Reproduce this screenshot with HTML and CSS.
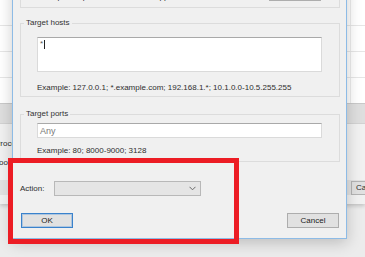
FILE: index.html
```html
<!DOCTYPE html>
<html lang="en">
<head>
  <meta charset="UTF-8" />
  <title>Rule - Target</title>
  <link rel="stylesheet" href="styles.css">
</head>
<body>

  <div class="mainwin">
    <div class="list">
      <div class="row"><span class="cell"></span></div>
      <div class="row"><span class="cell"></span></div>
      <div class="row"><span class="cell"></span></div>
      <div class="row"><span class="cell"></span></div>
    </div>
    <div class="panel">
      <div class="band"></div>
      <div class="prow first"><span class="plabel">Process</span></div>
      <div class="prow"><span class="plabel">Tools</span></div>
      <div class="bar">
        <span class="bbtn">Cancel</span>
      </div>
    </div>
  </div>

  <div class="dialog">
    <div class="topgroup">
      <div class="toprow">
        <span class="hint">Example: iexplore.exe; "C:\some app.exe"; fire*.exe; *.bin</span>
        <span class="btn small">Browse...</span>
      </div>
    </div>

    <fieldset class="group hosts">
      <legend>Target hosts</legend>
      <div class="textarea">*<span class="caret"></span></div>
      <p class="hint">Example: 127.0.0.1; *.example.com; 192.168.1.*; 10.1.0.0-10.5.255.255</p>
    </fieldset>

    <fieldset class="group ports">
      <legend>Target ports</legend>
      <div class="input">Any</div>
      <p class="hint">Example: 80; 8000-9000; 3128</p>
    </fieldset>

    <div class="action">
      <span class="label">Action:</span>
      <div class="select">
        <svg width="7" height="5" viewBox="0 0 7 5"><path d="M0.5 0.8 L3.5 3.8 L6.5 0.8" fill="none" stroke="#6a6a6a" stroke-width="1"/></svg>
      </div>
    </div>

    <div class="buttons">
      <span class="btn default">OK</span>
      <span class="btn">Cancel</span>
    </div>
  </div>

  <div class="callout"></div>

</body>
</html>
```

FILE: styles.css
```css
body {
  margin: 0;
  width: 365px;
  height: 257px;
  overflow: hidden;
  position: relative;
  background: #ececec;
  font-family: "Liberation Sans", Arial, sans-serif;
  font-size: 8px;
  color: #2e2e2e;
}

/* window behind the dialog */
.mainwin {
  height: 204px;
  background: #fff;
  box-shadow: 0 2px 4px rgba(0,0,0,0.18);
  display: flex;
  flex-direction: column;
}

.list .row {
  height: 25px;
  border-bottom: 1px solid #e6e6e6;
}

.list .row:last-child {
  border-bottom-color: #c9c9c9;
}

.list .cell {
  display: block;
  width: 350px;
  height: 100%;
  border-right: 1px solid #ececec;
}

.panel {
  flex: 1;
  background: #f1f1f1;
  display: flex;
  flex-direction: column;
}

.band {
  height: 19px;
  background: #dedede;
  border-bottom: 1px solid #d2d2d2;
}

.prow {
  height: 19px;
  display: flex;
  align-items: center;
}

.prow.first {
  margin-top: 10px;
}

.plabel {
  margin-left: -5px;
}

.bar {
  height: 15px;
  margin-top: 8px;
  background: #e2e2e2;
  display: flex;
  justify-content: flex-end;
  align-items: center;
}

.bbtn {
  width: 40px;
  height: 12px;
  margin-right: -32px;
  background: #e1e1e1;
  border: 1px solid #b4b4b4;
  line-height: 12px;
  padding-left: 4px;
}

/* dialog */
.dialog {
  position: absolute;
  left: 12px;
  top: -31px;
  width: 333px;
  height: 268px;
  background: #f0f0f0;
  border: 1px solid #8dbbe6;
  box-shadow: 0 4px 14px rgba(0,0,0,0.2);
  display: flex;
  flex-direction: column;
}

.hint {
  margin: 0;
  line-height: 10px;
  white-space: nowrap;
}

.topgroup {
  margin: 0 6px 0 7px;
  padding: 16px 18px 6px 16px;
  border: 1px solid #dcdcdc;
  border-top: none;
}

.toprow {
  height: 15px;
  display: flex;
  justify-content: space-between;
  align-items: flex-end;
  overflow: hidden;
}

.toprow .hint {
  line-height: 9px;
}

.btn {
  box-sizing: border-box;
  width: 52px;
  height: 15px;
  background: #e1e1e1;
  border: 1px solid #adadad;
  text-align: center;
  line-height: 13px;
  color: #222;
}

.group {
  margin: 10px 6px 0 7px;
  border: 1px solid #dcdcdc;
  min-width: 0;
}

.group legend {
  margin-left: -13px;
  padding: 0 2px;
  line-height: 10px;
  color: #333;
}

.hosts {
  padding: 9px 17px 3px 16px;
}

.ports {
  margin-top: 12px;
  padding: 4px 17px 5px 16px;
}

.textarea,
.input {
  box-sizing: border-box;
  width: 285px;
  background: #fff;
  border: 1px solid #dadada;
  border-top-color: #a9a9a9;
  padding: 1px 2px;
}

.textarea {
  height: 35px;
  line-height: 10px;
  color: #555;
}

.caret {
  display: inline-block;
  width: 1px;
  height: 9px;
  background: #222;
  margin-left: 1px;
  vertical-align: -3px;
}

.input {
  height: 15px;
  font-size: 9px;
  line-height: 12px;
  color: #7a7a7a;
}

.hosts .hint {
  margin-top: 11px;
}

.ports .hint {
  margin-top: 8px;
}

.action {
  display: flex;
  align-items: center;
  margin: 19px 0 0 7px;
}

.action .label {
  width: 34px;
}

.select {
  box-sizing: border-box;
  width: 147px;
  height: 15px;
  background: #e5e5e5;
  border: 1px solid #b8b8b8;
  display: flex;
  justify-content: flex-end;
  align-items: center;
  padding-right: 4px;
}

.buttons {
  display: flex;
  justify-content: space-between;
  margin: 17px 7px 0 8px;
}

.btn.default {
  border-color: #3a82cc;
  box-shadow: inset 0 0 0 1px rgba(80,150,220,0.35);
}

/* red highlight drawn over the screenshot */
.callout {
  position: absolute;
  left: 8px;
  top: 158px;
  width: 221px;
  height: 76px;
  border: 5px solid #ec1c24;
}
```
